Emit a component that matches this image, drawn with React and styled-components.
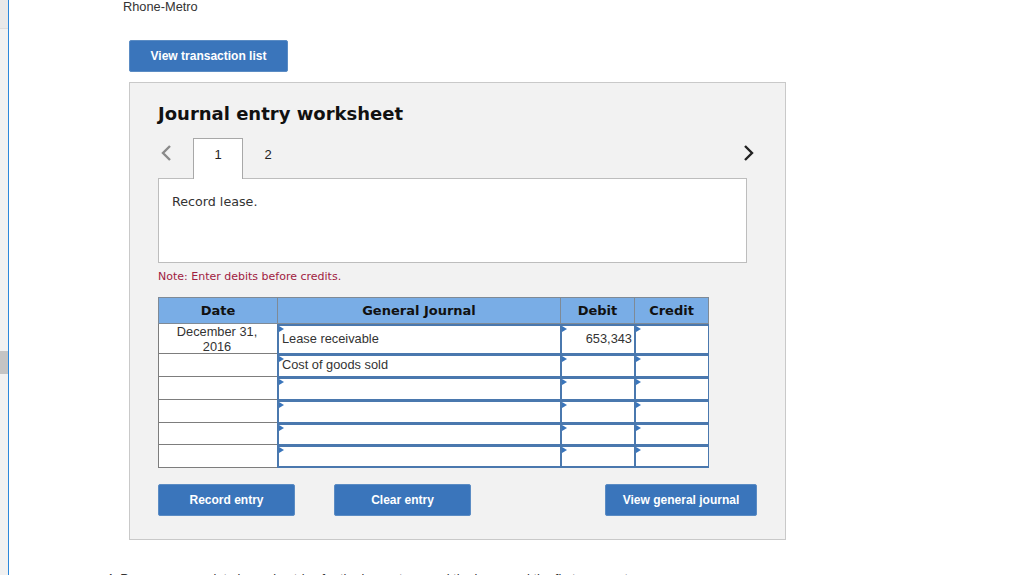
import React from 'react';
import styled, { createGlobalStyle } from 'styled-components';

const GlobalStyle = createGlobalStyle`
  html, body {
    margin: 0;
    padding: 0;
    height: 575px;
    overflow: hidden;
    background: #fff;
    font-family: "Liberation Sans", Arial, sans-serif;
  }
`;

const Page = styled.div`
  display: flex;
  height: 575px;
  overflow: hidden;
`;

const SideRail = styled.div`
  width: 8px;
  flex: none;
  display: flex;
  flex-direction: column;
  background: #f1f1f1;
  border-right: 1px solid #2b87da;
`;

const RailTop = styled.div`
  height: 28px;
  background: #e9e9e9;
  border-bottom: 1px solid #dcdcdc;
`;

const RailGrip = styled.div`
  height: 23px;
  margin-top: 322px;
  background: #c4c4c4;
`;

const Content = styled.div`
  flex: 1;
  padding-left: 113px;
`;

const Company = styled.div`
  margin-left: 1px;
  font-size: 12.8px;
  line-height: 14px;
  color: #333;
`;

const Button = styled.button`
  display: block;
  height: 32px;
  width: ${p => p.$w}px;
  padding: 0;
  border: 1px solid #5b8cc4;
  border-radius: 2px;
  background: #3a75bb;
  color: #fff;
  font-family: "Liberation Sans", Arial, sans-serif;
  font-size: 12px;
  font-weight: bold;
  text-align: center;
`;

const TopButton = styled(Button)`
  margin: 26px 0 10px 7px;
`;

const Panel = styled.div`
  width: 657px;
  height: 458px;
  margin-left: 7px;
  box-sizing: border-box;
  padding: 19px 28px 0;
  background: #f2f2f2;
  border: 1px solid #c9c9c9;
`;

const Title = styled.h2`
  margin: 0;
  font-family: "DejaVu Sans", Verdana, sans-serif;
  font-size: 18px;
  line-height: 24px;
  font-weight: bold;
  color: #111;
`;

const TabRow = styled.div`
  display: flex;
  align-items: flex-start;
  height: 41px;
  margin-top: 12px;
  margin-bottom: -1px;
`;

const Arrow = styled.div`
  width: 35px;
  height: 30px;
  flex: none;
  display: flex;
  align-items: center;
  padding-left: 2px;
  box-sizing: border-box;
`;

const Tab = styled.div`
  width: 50px;
  height: 41px;
  box-sizing: border-box;
  display: flex;
  align-items: center;
  justify-content: center;
  padding-bottom: 9px;
  font-size: 13px;
  color: #222;
  ${p => p.$active && `
    background: #fff;
    border: 1px solid #a8a8a8;
    border-bottom: none;
    position: relative;
    z-index: 1;
  `}
`;

const NextArrow = styled(Arrow)`
  margin-left: auto;
  margin-right: 2px;
  width: 12px;
  padding-left: 0;
`;

const Prompt = styled.div`
  width: 589px;
  height: 85px;
  box-sizing: border-box;
  padding: 15px 13px;
  background: #fff;
  border: 1px solid #bdbdbd;
  font-family: "DejaVu Sans", Verdana, sans-serif;
  font-size: 12.7px;
  line-height: 16px;
  color: #333;
`;

const Note = styled.div`
  margin-top: 7px;
  font-family: "DejaVu Sans", Verdana, sans-serif;
  font-size: 11px;
  line-height: 14px;
  color: #a0213f;
`;

const Journal = styled.div`
  display: grid;
  grid-template-columns: 120px 283px 74px 74px;
  grid-template-rows: 27px 30px 23px 23px 23px 22px 23px;
  width: 551px;
  margin-top: 13px;
`;

const HeadCell = styled.div`
  display: flex;
  align-items: center;
  justify-content: center;
  background: #79ade6;
  border: 1px solid #7f8a96;
  margin-left: ${p => (p.$first ? 0 : -1)}px;
  font-family: "DejaVu Sans", Verdana, sans-serif;
  font-size: 13px;
  font-weight: bold;
  color: #111;
`;

const DateCell = styled.div`
  display: flex;
  align-items: center;
  justify-content: center;
  padding: 0 16px 0 14px;
  background: #fff;
  border: 1px solid #7d7d7d;
  border-top: none;
  font-size: 12.8px;
  line-height: 15px;
  text-align: center;
  color: #333;
`;

const EntryCell = styled.div`
  position: relative;
  display: flex;
  align-items: center;
  justify-content: ${p => (p.$num ? 'flex-end' : 'flex-start')};
  background: #fff;
  border: 2px solid #4a78ae;
  border-right-width: 1px;
  border-bottom-width: ${p => (p.$last ? 2 : 1)}px;
  margin-left: -1px;
  padding: 0 2px 3px 3px;
  font-size: 12.8px;
  color: #333;
  box-sizing: border-box;
  &::before {
    content: '';
    position: absolute;
    left: 0;
    top: 0;
    border-left: 5px solid #3a75bb;
    border-top: 3px solid transparent;
    border-bottom: 3px solid transparent;
  }
`;

const Actions = styled.div`
  display: flex;
  margin-top: 16px;
  width: 599px;
`;

const RecordButton = styled(Button)`
  margin-right: 39px;
`;

const ViewJournal = styled(Button)`
  margin-left: auto;
`;

const Footer = styled.div`
  margin: 31px 0 0 -16px;
  font-size: 12.8px;
  line-height: 15px;
  white-space: nowrap;
  color: #333;
`;

const rows = [
  { date: 'December 31, 2016', account: 'Lease receivable', debit: '653,343' },
  { date: '', account: 'Cost of goods sold', debit: '' },
  { date: '', account: '', debit: '' },
  { date: '', account: '', debit: '' },
  { date: '', account: '', debit: '' },
  { date: '', account: '', debit: '' },
];

const ChevronLeft = ({ color }) => (
  <svg width="12" height="16" viewBox="0 0 12 16" fill="none">
    <path d="M10 1 L3 8 L10 15" stroke={color} strokeWidth="2.4" />
  </svg>
);

const ChevronRight = ({ color }) => (
  <svg width="12" height="16" viewBox="0 0 12 16" fill="none">
    <path d="M2 1 L9 8 L2 15" stroke={color} strokeWidth="2.4" />
  </svg>
);

export default function App() {
  return (
    <Page>
      <GlobalStyle />
      <SideRail>
        <RailTop />
        <RailGrip />
      </SideRail>
      <Content>
        <Company>Rhone-Metro</Company>
        <TopButton $w={159}>View transaction list</TopButton>
        <Panel>
          <Title>Journal entry worksheet</Title>
          <TabRow>
            <Arrow><ChevronLeft color="#8a8a8a" /></Arrow>
            <Tab $active>1</Tab>
            <Tab>2</Tab>
            <NextArrow><ChevronRight color="#222" /></NextArrow>
          </TabRow>
          <Prompt>Record lease.</Prompt>
          <Note>Note: Enter debits before credits.</Note>
          <Journal>
            <HeadCell $first>Date</HeadCell>
            <HeadCell>General Journal</HeadCell>
            <HeadCell>Debit</HeadCell>
            <HeadCell>Credit</HeadCell>
            {rows.map((row, i) => (
              <React.Fragment key={i}>
                <DateCell>{row.date}</DateCell>
                <EntryCell $last={i === rows.length - 1}>{row.account}</EntryCell>
                <EntryCell $last={i === rows.length - 1} $num>{row.debit}</EntryCell>
                <EntryCell $last={i === rows.length - 1} />
              </React.Fragment>
            ))}
          </Journal>
          <Actions>
            <RecordButton $w={137}>Record entry</RecordButton>
            <Button $w={137}>Clear entry</Button>
            <ViewJournal $w={152}>View general journal</ViewJournal>
          </Actions>
        </Panel>
        <Footer>4. Prepare appropriate journal entries for the lessor to record the lease and the first payment.</Footer>
      </Content>
    </Page>
  );
}
